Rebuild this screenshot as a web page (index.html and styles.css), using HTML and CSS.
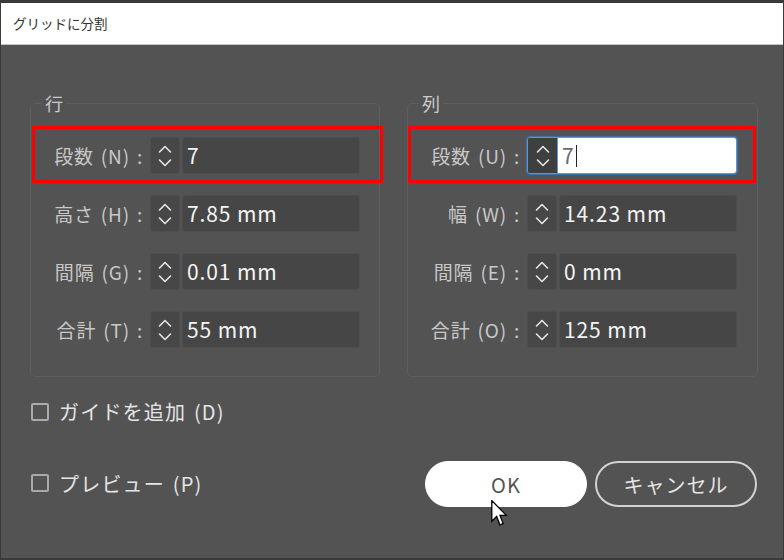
FILE: index.html
```html
<!DOCTYPE html>
<html lang="ja">
<head>
<meta charset="utf-8">
<title>グリッドに分割</title>
<link rel="stylesheet" href="styles.css">
</head>
<body>
<div class="window">
  <div class="titlebar">グリッドに分割</div>
  <div class="content">
    <div class="groups">
      <fieldset class="group">
        <legend>行</legend>
        <div class="row marked">
          <span class="label">段数 (N) :</span>
          <div class="field"><span class="spin"><svg viewBox="0 0 14 26" width="14" height="26"><path d="M1.5 9 L7 3.5 L12.5 9 M1.5 17 L7 22.5 L12.5 17"/></svg></span><span class="val">7</span></div>
          <span class="mark"></span>
        </div>
        <div class="row">
          <span class="label">高さ (H) :</span>
          <div class="field"><span class="spin"><svg viewBox="0 0 14 26" width="14" height="26"><path d="M1.5 9 L7 3.5 L12.5 9 M1.5 17 L7 22.5 L12.5 17"/></svg></span><span class="val">7.85 mm</span></div>
        </div>
        <div class="row">
          <span class="label">間隔 (G) :</span>
          <div class="field"><span class="spin"><svg viewBox="0 0 14 26" width="14" height="26"><path d="M1.5 9 L7 3.5 L12.5 9 M1.5 17 L7 22.5 L12.5 17"/></svg></span><span class="val">0.01 mm</span></div>
        </div>
        <div class="row">
          <span class="label">合計 (T) :</span>
          <div class="field"><span class="spin"><svg viewBox="0 0 14 26" width="14" height="26"><path d="M1.5 9 L7 3.5 L12.5 9 M1.5 17 L7 22.5 L12.5 17"/></svg></span><span class="val">55 mm</span></div>
        </div>
      </fieldset>
      <fieldset class="group right">
        <legend>列</legend>
        <div class="row marked">
          <span class="label">段数 (U) :</span>
          <div class="field focus"><span class="spin"><svg viewBox="0 0 14 26" width="14" height="26"><path d="M1.5 9 L7 3.5 L12.5 9 M1.5 17 L7 22.5 L12.5 17"/></svg></span><span class="val">7<span class="caret"></span></span></div>
          <span class="mark"></span>
        </div>
        <div class="row">
          <span class="label">幅 (W) :</span>
          <div class="field"><span class="spin"><svg viewBox="0 0 14 26" width="14" height="26"><path d="M1.5 9 L7 3.5 L12.5 9 M1.5 17 L7 22.5 L12.5 17"/></svg></span><span class="val">14.23 mm</span></div>
        </div>
        <div class="row">
          <span class="label">間隔 (E) :</span>
          <div class="field"><span class="spin"><svg viewBox="0 0 14 26" width="14" height="26"><path d="M1.5 9 L7 3.5 L12.5 9 M1.5 17 L7 22.5 L12.5 17"/></svg></span><span class="val">0 mm</span></div>
        </div>
        <div class="row">
          <span class="label">合計 (O) :</span>
          <div class="field"><span class="spin"><svg viewBox="0 0 14 26" width="14" height="26"><path d="M1.5 9 L7 3.5 L12.5 9 M1.5 17 L7 22.5 L12.5 17"/></svg></span><span class="val">125 mm</span></div>
        </div>
      </fieldset>
    </div>
    <div class="check guide"><span class="box"></span>ガイドを追加 (D)</div>
    <div class="bottom">
      <div class="check"><span class="box"></span>プレビュー (P)</div>
      <div class="buttons">
        <button class="btn ok">OK</button>
        <button class="btn cancel">キャンセル</button>
      </div>
    </div>
  </div>
  <svg class="cursor" viewBox="0 0 13 21" width="17" height="27"><path d="M0.5 0.5 L0.5 16.5 L4.3 12.8 L6.8 19.3 L9.3 18.3 L6.9 11.9 L11.8 11.9 Z"/></svg>
</div>
</body>
</html>
```

FILE: styles.css
```css
html, body {
  margin: 0;
  padding: 0;
  background: #3a3a3a;
}
body {
  width: 784px;
  height: 560px;
  overflow: hidden;
  font-family: "Noto Sans CJK JP", "Noto Sans", sans-serif;
}
.window {
  position: relative;
  margin-top: 3px;
  margin-left: 1px;
  width: 782px;
  height: 555px;
  background: #535353;
}
.titlebar {
  height: 41px;
  background: #ffffff;
  border-bottom: 1px solid #c8c8c8;
  color: #333;
  font-size: 13.5px;
  line-height: 41px;
  padding-left: 12px;
}
.content {
  padding: 0 0 0 29px;
}
.groups {
  display: flex;
  gap: 27px;
  padding-top: 47px;
}
.group {
  margin: 0;
  width: 348px;
  padding: 23px 0 28px 0;
  border: 1px solid #5e5e5e;
  border-radius: 5px;
  display: flex;
  flex-direction: column;
  gap: 21px;
  min-inline-size: 0;
}
.group.right {
  width: 349px;
}
.group legend {
  margin-left: 11px;
  padding: 0 3px;
  font-size: 18px;
  line-height: 22px;
  color: #cbcbcb;
}
.row {
  position: relative;
  display: flex;
  align-items: center;
  height: 37px;
}
.label {
  width: 112px;
  text-align: right;
  padding-right: 7px;
  font-size: 19px;
  color: #c8c8c8;
  white-space: pre;
  letter-spacing: 0.8px;
  word-spacing: 2px;
}
.field {
  display: flex;
  gap: 2px;
  width: 210px;
  height: 37px;
}
.spin {
  width: 30px;
  flex: none;
  background: #474747;
  border: 1px solid #4e4e4e;
  border-radius: 3px;
  box-sizing: border-box;
  display: flex;
  align-items: center;
  justify-content: center;
}
.spin svg path {
  fill: none;
  stroke: #e6e6e6;
  stroke-width: 1.6;
  stroke-linecap: round;
  stroke-linejoin: round;
}
.val {
  flex: 1;
  background: #464646;
  border: 1px solid #4e4e4e;
  border-radius: 3px;
  box-sizing: border-box;
  padding-left: 4px;
  font-size: 21px;
  letter-spacing: 0.9px;
  line-height: 35px;
  color: #f4f4f4;
  display: flex;
  align-items: center;
}
.field.focus {
  gap: 0;
  border: 1px solid #5f95d0;
  border-radius: 3px;
  box-sizing: border-box;
  box-shadow: 0 0 0 1px #3f6fa3;
}
.field.focus .spin {
  background: #3f3f3f;
  border: none;
  border-right: 1px solid #5f95d0;
  border-radius: 2px 0 0 2px;
}
.field.focus .val {
  background: #ffffff;
  border: none;
  border-radius: 0 2px 2px 0;
  color: #6a6a6a;
}
.caret {
  display: inline-block;
  width: 1px;
  height: 22px;
  background: #222;
  margin-left: 1px;
}
.mark {
  position: absolute;
  left: 1px;
  right: -4px;
  top: -11px;
  bottom: -9px;
  border: 3px solid #ff0000;
}
.group.right .mark {
  left: 0;
  right: 1px;
}
.check {
  display: flex;
  align-items: center;
  gap: 10px;
  font-size: 20px;
  color: #e4e4e4;
  letter-spacing: 1.2px;
  word-spacing: 2px;
}
.box {
  width: 14px;
  height: 14px;
  border: 2px solid #a9a9a9;
  border-radius: 2px;
}
.guide {
  margin-top: 20px;
  padding-left: 1px;
}
.bottom {
  margin-top: 33px;
  display: flex;
  align-items: center;
  justify-content: space-between;
  padding-left: 1px;
  padding-right: 26px;
}
.buttons {
  display: flex;
  gap: 8px;
  margin-top: 2px;
}
.btn {
  width: 162px;
  height: 46px;
  border-radius: 23px;
  font-family: "Noto Sans CJK JP", "Noto Sans", sans-serif;
  font-size: 20px;
  letter-spacing: 1px;
  padding: 0;
}
.ok {
  background: #ffffff;
  border: 1px solid #ffffff;
  color: #555;
}
.cancel {
  background: transparent;
  border: 2px solid #d2d2d2;
  color: #e4e4e4;
}
.cursor {
  position: absolute;
  left: 490px;
  top: 497px;
}
.cursor path {
  fill: #ffffff;
  stroke: #000;
  stroke-width: 1;
  stroke-linejoin: miter;
}
```
